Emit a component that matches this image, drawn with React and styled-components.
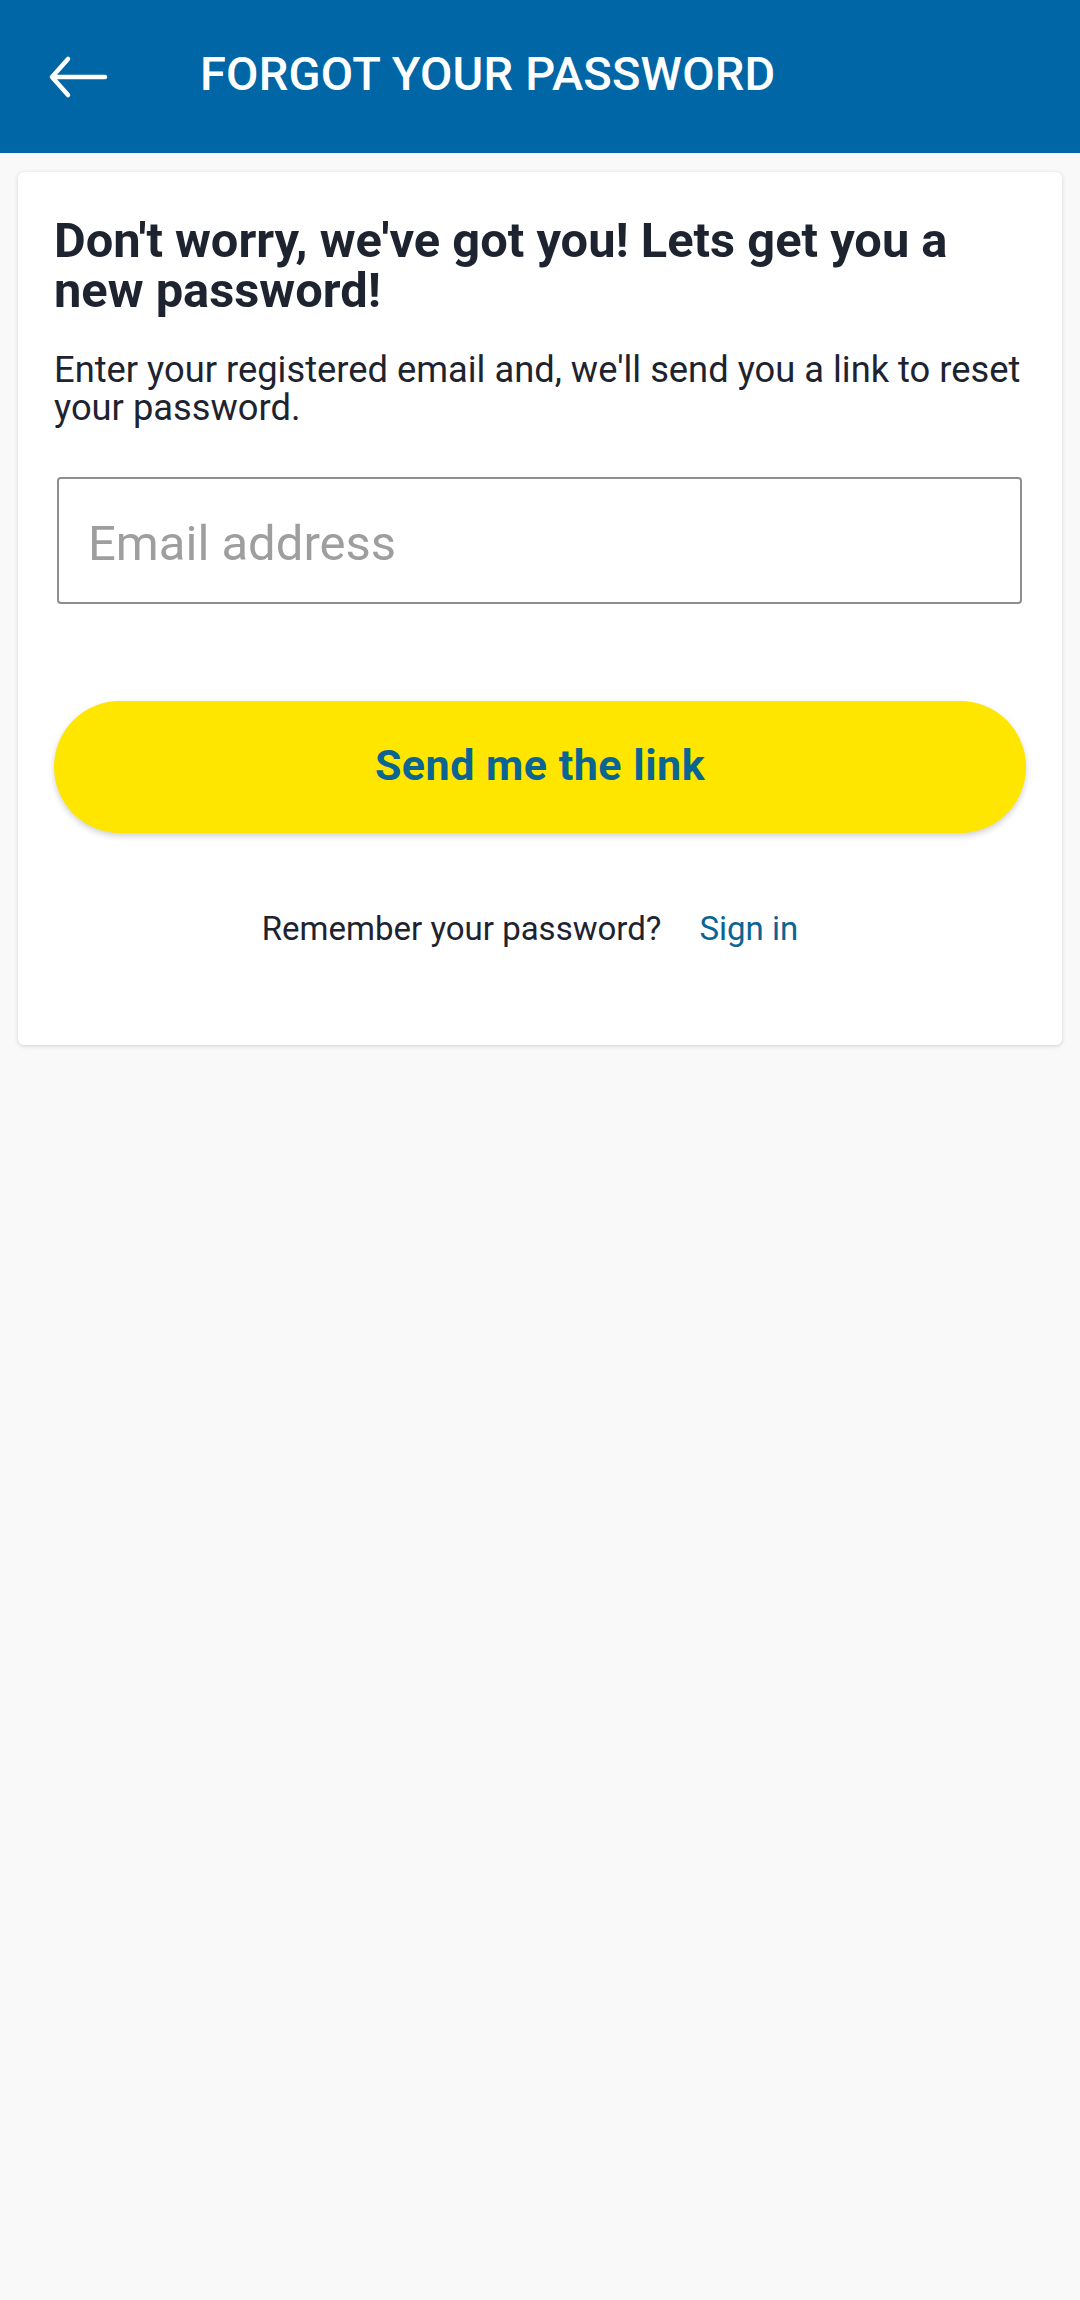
import styled, { createGlobalStyle } from 'styled-components';

const GlobalStyle = createGlobalStyle`
  html, body {
    margin: 0;
    padding: 0;
    background: #f9f9f9;
    font-family: Roboto, "Liberation Sans", sans-serif;
  }
  * {
    box-sizing: border-box;
  }
`;

const Page = styled.div`
  min-height: 2300px;
  background: #f9f9f9;
`;

const TopBar = styled.header`
  height: 153px;
  background: #0066a6;
  display: flex;
  align-items: center;
  padding: 0 0 0 48px;
  gap: 92px;
`;

const BackButton = styled.button`
  border: none;
  background: transparent;
  padding: 0;
  width: 60px;
  height: 44px;
  display: flex;
  align-items: center;
  cursor: pointer;
`;

const Title = styled.h1`
  margin: 0 0 6px;
  color: #ffffff;
  font-size: 47px;
  font-weight: 500;
  letter-spacing: 0.2px;
`;

const Main = styled.main`
  padding: 19px 18px 0;
`;

const Card = styled.section`
  background: #ffffff;
  border-radius: 6px;
  box-shadow: 0 1px 4px rgba(0, 0, 0, 0.16);
  padding: 44px 36px 96px;
  display: flex;
  flex-direction: column;
`;

const Heading = styled.h2`
  margin: 0;
  color: #1e2330;
  font-size: 48.8px;
  line-height: 50px;
  font-weight: 700;
`;

const Intro = styled.p`
  margin: 35px 0 0;
  color: #1e2330;
  font-size: 36.3px;
  line-height: 38px;
  font-weight: 400;
`;

const EmailInput = styled.input`
  margin: 50px 4px 0 3px;
  height: 127px;
  border: 2px solid #8e8e8e;
  border-radius: 4px;
  padding: 6px 29px 0;
  font-family: Roboto, sans-serif;
  font-size: 49px;
  color: #222;
  outline: none;
  &::placeholder {
    color: #9e9e9e;
  }
`;

const SendButton = styled.button`
  margin-top: 97px;
  height: 132px;
  border: none;
  border-radius: 66px;
  padding: 0 0 5px;
  background: #ffe600;
  box-shadow: 0 3px 6px rgba(0, 0, 0, 0.18);
  color: #0b6592;
  font-family: Roboto, sans-serif;
  font-size: 43px;
  font-weight: 700;
  letter-spacing: 0.5px;
  cursor: pointer;
`;

const Footer = styled.div`
  margin-top: 76px;
  padding-right: 20px;
  display: flex;
  justify-content: center;
  gap: 38px;
  font-size: 33px;
  line-height: 40px;
`;

const Muted = styled.span`
  color: #1e2330;
`;

const Link = styled.a`
  color: #0b6592;
  text-decoration: none;
  cursor: pointer;
`;

const BackArrow = () => (
  <svg width="60" height="44" viewBox="0 0 60 44" fill="none">
    <path
      d="M4 22 H57 M4 22 L20 4 M4 22 L20 40"
      stroke="#ffffff"
      strokeWidth="4.5"
      strokeLinecap="round"
      strokeLinejoin="round"
    />
  </svg>
);

export default function App() {
  return (
    <>
      <GlobalStyle />
      <Page>
        <TopBar>
          <BackButton aria-label="Back">
            <BackArrow />
          </BackButton>
          <Title>FORGOT YOUR PASSWORD</Title>
        </TopBar>
        <Main>
          <Card>
            <Heading>Don't worry, we've got you! Lets get you a new password!</Heading>
            <Intro>
              Enter your registered email and, we'll send you a link to reset your password.
            </Intro>
            <EmailInput type="email" placeholder="Email address" />
            <SendButton>Send me the link</SendButton>
            <Footer>
              <Muted>Remember your password?</Muted>
              <Link>Sign in</Link>
            </Footer>
          </Card>
        </Main>
      </Page>
    </>
  );
}
